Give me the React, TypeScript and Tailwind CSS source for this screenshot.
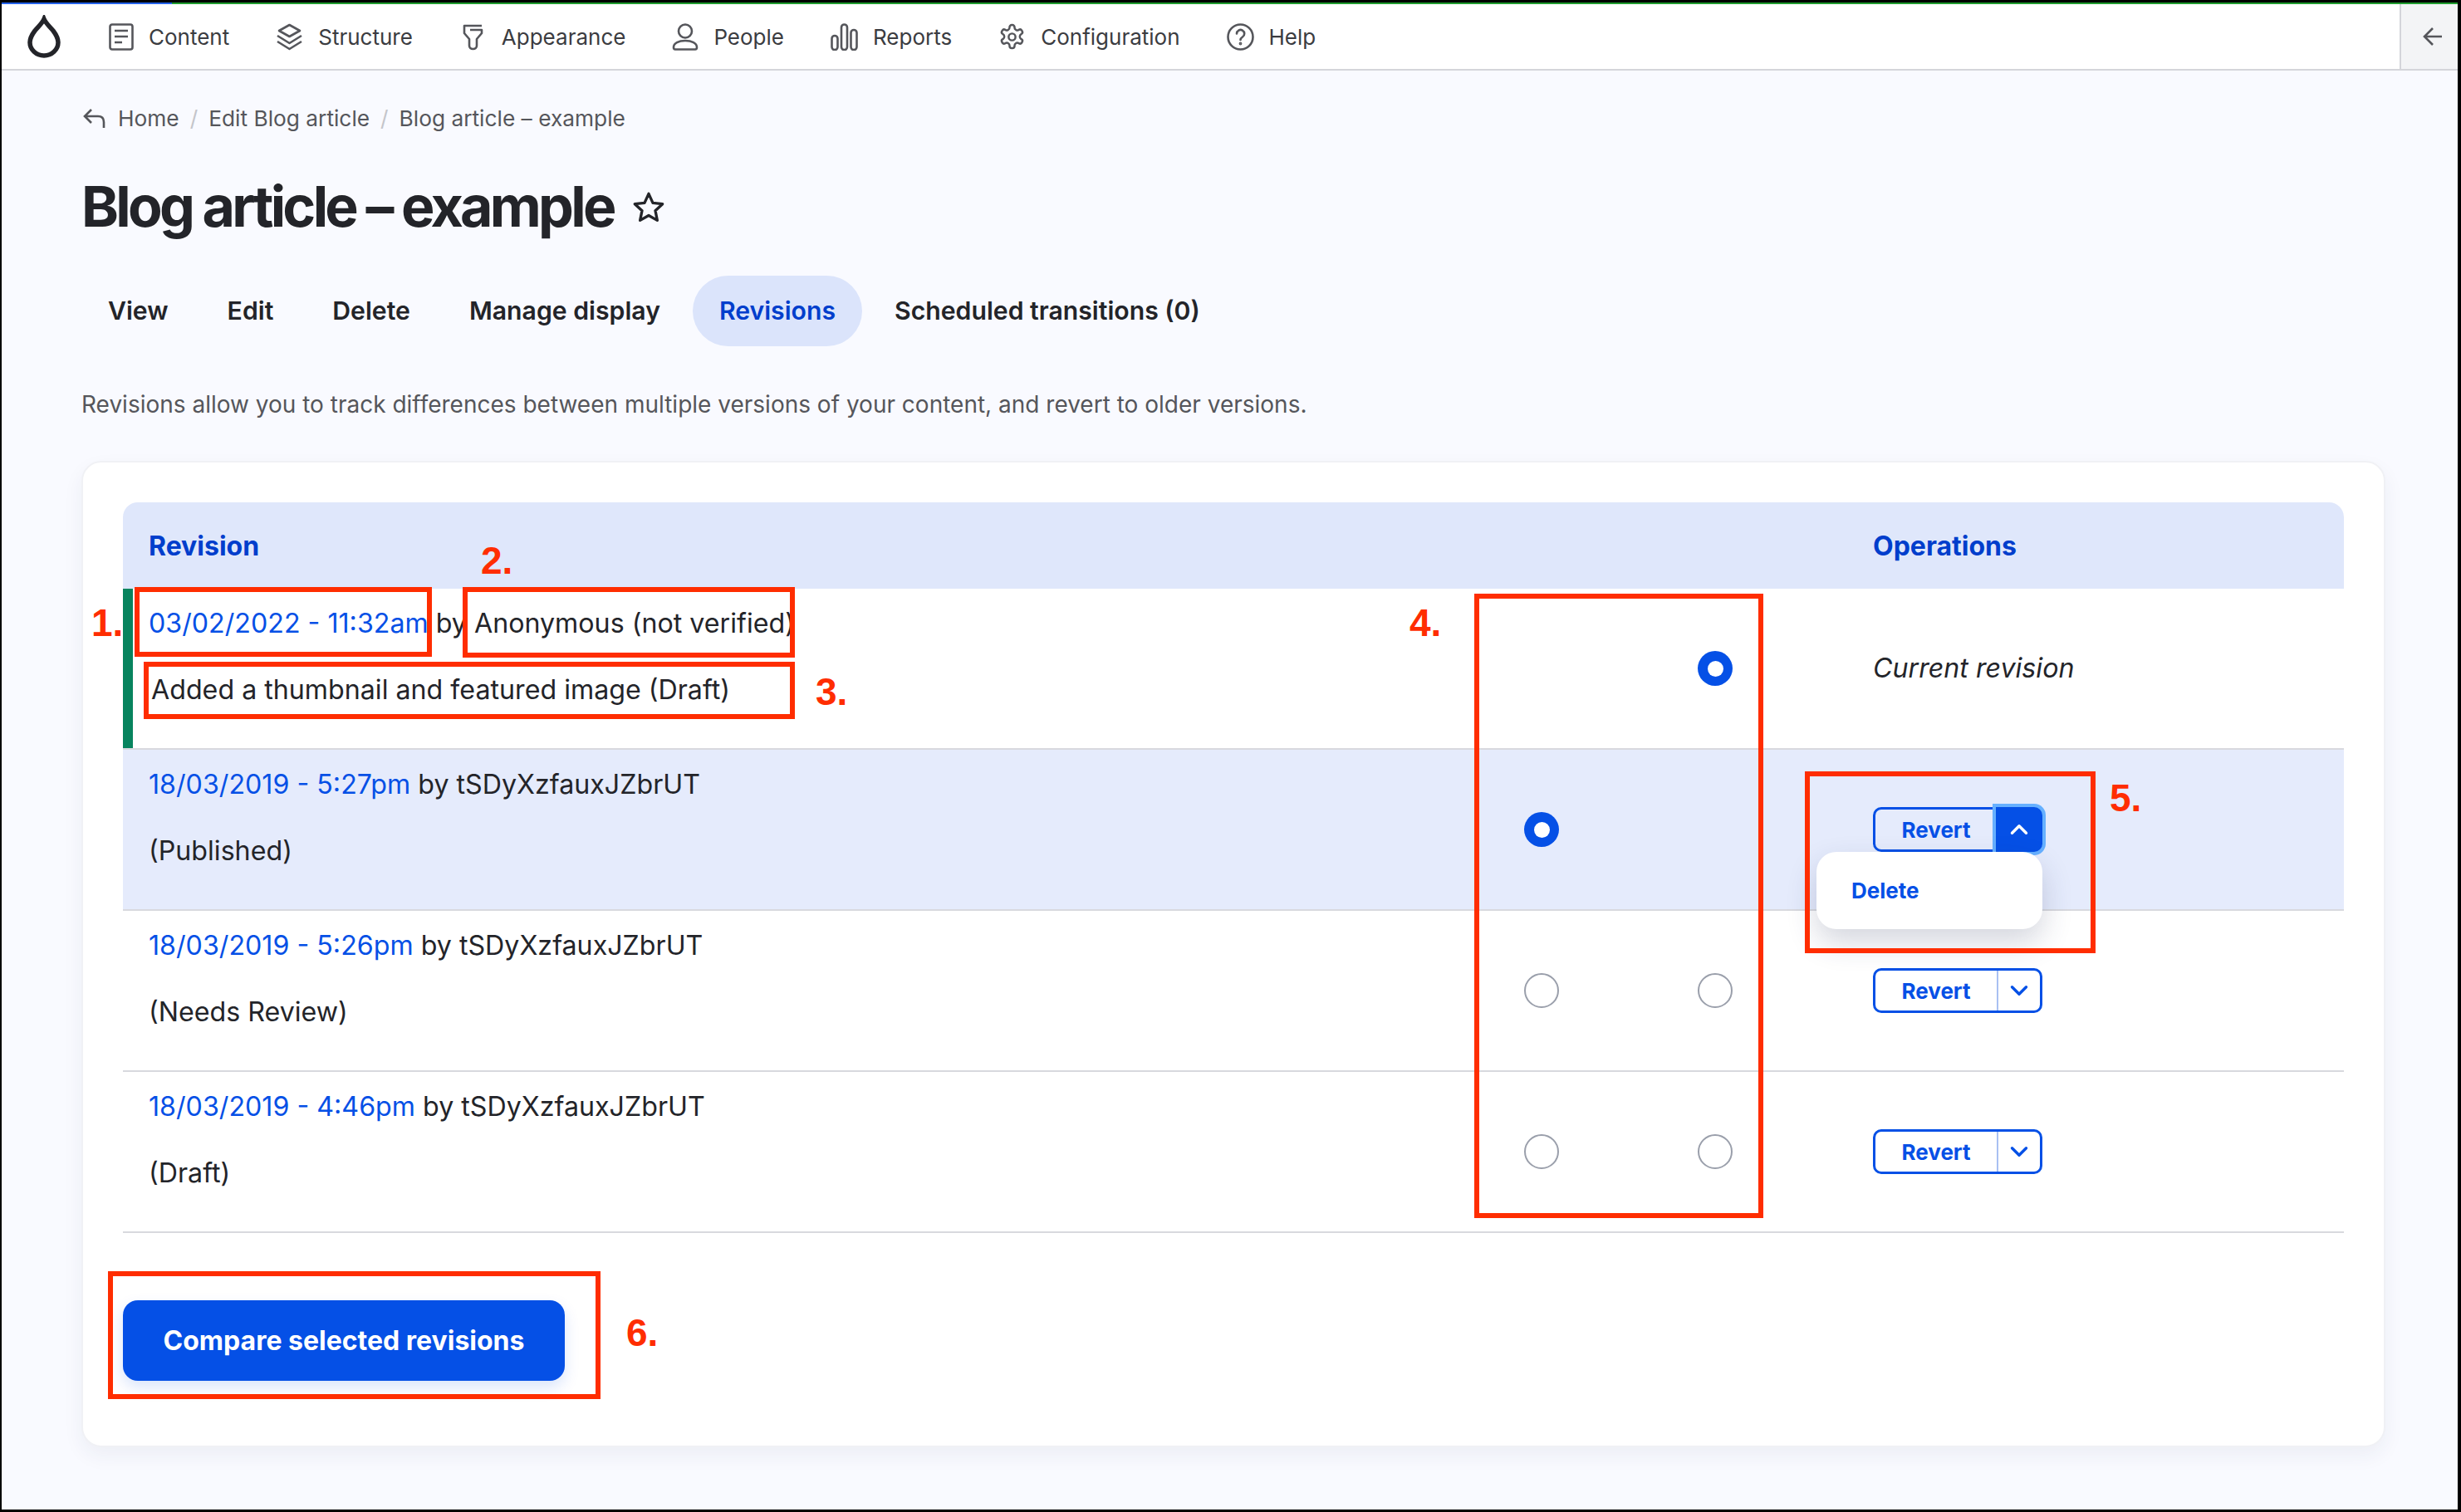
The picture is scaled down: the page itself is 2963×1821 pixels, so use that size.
import type { ReactNode } from 'react'
import { ChevronDown, ChevronUp } from 'lucide-react'

const navItems = [
  { label: 'Content', icon: <ContentIcon />, className: 'gap-[18px]' },
  { label: 'Structure', icon: <StructureIcon />, className: 'gap-[18px]' },
  { label: 'Appearance', icon: <AppearanceIcon />, className: 'ml-[4px] gap-[22px]' },
  { label: 'People', icon: <PeopleIcon />, className: 'gap-[18px]' },
  { label: 'Reports', icon: <ReportsIcon />, className: 'gap-[18px]' },
  { label: 'Configuration', icon: <GearIcon />, className: 'gap-[18px]' },
  { label: 'Help', icon: <HelpIcon />, className: 'gap-[18px]' },
]

const tabs = ['View', 'Edit', 'Delete', 'Manage display', 'Revisions', 'Scheduled transitions (0)']

const annotations = [
  'left-[162px] top-[707px] w-[358px] h-[84px]',
  'left-[557px] top-[707px] w-[400px] h-[85px]',
  'left-[173px] top-[797px] w-[784px] h-[69px]',
  'left-[1775px] top-[715px] w-[348px] h-[752px]',
  'left-[2173px] top-[929px] w-[350px] h-[219px]',
  'left-[130px] top-[1531px] w-[593px] h-[154px]',
]

const labels = [
  { text: '1.', className: 'left-[110px] top-[725px]' },
  { text: '2.', className: 'left-[579px] top-[650px]' },
  { text: '3.', className: 'left-[982px] top-[808px]' },
  { text: '4.', className: 'left-[1697px] top-[725px]' },
  { text: '5.', className: 'left-[2540px] top-[936px]' },
  { text: '6.', className: 'left-[754px] top-[1580px]' },
]

function ContentIcon() {
  return (
    <svg className="h-[33px] w-[30px]" viewBox="0 0 30 33" fill="none" stroke="#55565b" strokeWidth="2.6">
      <rect x="1.500" y="1.500" width="27" height="30" rx="2.500" />
      <path d="M7 9h16M7 16h16M7 23h9" />
    </svg>
  )
}

function StructureIcon() {
  return (
    <svg className="h-[33px] w-[33px]" viewBox="0 0 33 33" fill="none" stroke="#55565b" strokeWidth="2.6" strokeLinejoin="round">
      <path d="M16.500 2 29 9 16.500 16 4 9Z" />
      <path d="M2 15l14.500 9L31 15M2 22l14.500 9L31 22" />
    </svg>
  )
}

function AppearanceIcon() {
  return (
    <svg className="h-[33px] w-[25px]" viewBox="0 0 25 33" fill="none" stroke="#55565b" strokeWidth="2.6" strokeLinejoin="round">
      <path d="M23 3H2v9l6 7v8c0 2.500 2 4 4.500 4s4.500-1.500 4.500-4v-8l6-7V8H9" />
    </svg>
  )
}

function PeopleIcon() {
  return (
    <svg className="h-[33px] w-[32px]" viewBox="0 0 32 33" fill="none" stroke="#55565b" strokeWidth="2.6">
      <circle cx="16" cy="9.500" r="8" />
      <path d="M2 29c0-5 6-8 14-8s14 3 14 8c0 1.500-.8 2.500-2 2.500H4c-1.200 0-2-1-2-2.500Z" strokeLinejoin="round" />
    </svg>
  )
}

function ReportsIcon() {
  return (
    <svg className="h-[33px] w-[33px]" viewBox="0 0 33 33" fill="none" stroke="#55565b" strokeWidth="2.6">
      <rect x="1.500" y="15" width="7" height="17" rx="3.500" />
      <rect x="13" y="1.500" width="7" height="30.500" rx="3.500" />
      <rect x="24.500" y="8" width="7" height="24" rx="3.500" />
    </svg>
  )
}

function GearIcon() {
  return (
    <svg className="h-[33px] w-[33px]" viewBox="0 0 24 24" fill="none" stroke="#55565b" strokeWidth="1.8" strokeLinejoin="round">
      <path d="M12.200 1.500h-.4a2 2 0 0 0-2 2v.4a2 2 0 0 1-1 1.700l-.4.300a2 2 0 0 1-2 0l-.3-.2a2 2 0 0 0-2.700.7l-.2.400a2 2 0 0 0 .7 2.700l.3.200a2 2 0 0 1 1 1.700v.5a2 2 0 0 1-1 1.800l-.3.100a2 2 0 0 0-.7 2.700l.2.400a2 2 0 0 0 2.700.7l.3-.2a2 2 0 0 1 2 0l.4.300a2 2 0 0 1 1 1.700v.4a2 2 0 0 0 2 2h.4a2 2 0 0 0 2-2v-.4a2 2 0 0 1 1-1.700l.4-.3a2 2 0 0 1 2 0l.3.200a2 2 0 0 0 2.700-.7l.2-.4a2 2 0 0 0-.7-2.700l-.3-.1a2 2 0 0 1-1-1.800v-.5a2 2 0 0 1 1-1.700l.3-.2a2 2 0 0 0 .7-2.700l-.2-.4a2 2 0 0 0-2.700-.7l-.3.200a2 2 0 0 1-2 0l-.4-.3a2 2 0 0 1-1-1.700v-.4a2 2 0 0 0-2-2Z" />
      <circle cx="12" cy="12" r="3" />
    </svg>
  )
}

function HelpIcon() {
  return (
    <svg className="h-[33px] w-[33px]" viewBox="0 0 33 33" fill="none" stroke="#55565b" strokeWidth="2.6" strokeLinecap="round">
      <circle cx="16.500" cy="16.500" r="15" />
      <path d="M12 12.500a4.600 4.600 0 1 1 7 4c-1.500 1-2.500 1.800-2.500 3.500" />
      <circle cx="16.500" cy="24.500" r="0.600" fill="#55565b" />
    </svg>
  )
}

function RadioDot({ checked }: { checked?: boolean }) {
  if (checked) {
    return (
      <span className="flex h-[42px] w-[42px] items-center justify-center rounded-full bg-[#0550e6]">
        <span className="h-[19px] w-[19px] rounded-full bg-white" />
      </span>
    )
  }
  return <span className="h-[42px] w-[42px] rounded-full border-2 border-[#9a9fab] bg-white" />
}

function RevertButton() {
  return (
    <div className="flex h-[54px] w-[204px] overflow-hidden rounded-[10px] border-[3px] border-[#0550e6] bg-white text-[#0550e6]">
      <span className="flex w-[146px] items-center justify-center text-[26px] font-bold">Revert</span>
      <span className="flex flex-1 items-center justify-center border-l-2 border-[#a9c0f2]">
        <ChevronDown size={34} strokeWidth={2.4} />
      </span>
    </div>
  )
}

function OpenRevertButton() {
  return (
    <div className="relative flex h-[54px] w-[204px] rounded-[10px] border-[3px] border-[#0550e6] text-[#0550e6]">
      <span className="flex w-[146px] items-center justify-center text-[26px] font-bold">Revert</span>
      <span className="absolute top-[-3px] left-[145px] flex h-[54px] w-[56px] items-center justify-center rounded-r-[10px] bg-[#0550e6] text-white shadow-[0_0_0_4px_#66b0ff]">
        <ChevronUp size={34} strokeWidth={2.4} />
      </span>
      <div className="absolute top-[51px] left-[-71px] z-10 flex h-[93px] w-[272px] items-center rounded-[24px] bg-white pl-[42px] text-[26px] font-bold shadow-[0_16px_36px_rgba(40,50,90,0.2)]">
        Delete
      </div>
    </div>
  )
}

type RowProps = {
  date: string
  author: string
  note: string
  highlighted?: boolean
  current?: boolean
  left?: boolean
  right?: boolean
  action: ReactNode
  showLeft?: boolean
  showRight?: boolean
}

function RevisionRow({ date, author, note, highlighted, current, left, right, action, showLeft = true, showRight = true }: RowProps) {
  return (
    <div className={`flex h-[194px] items-center border-b-2 border-[#d8d9de] ${highlighted ? 'bg-[#e5ebfc]' : ''}`}>
      <div className={`flex h-full w-[1604px] flex-col pt-[22px] ${current ? 'border-l-[12px] border-[#07845e] pl-[19px]' : 'pl-[31px]'}`}>
        <p className="h-[80px] leading-[40px]">
          <a className="text-[#0550e6]">{date}</a> by {author}
        </p>
        <p className={`leading-[40px] ${current ? 'ml-[3px]' : ''}`}>{note}</p>
      </div>
      <div className="flex w-[208px] justify-center">{showLeft && <RadioDot checked={left} />}</div>
      <div className="flex w-[210px] justify-center">{showRight && <RadioDot checked={right} />}</div>
      <div className="pl-[85px]">{action}</div>
    </div>
  )
}

export default function App() {
  return (
    <div className="relative h-[1821px] w-[2963px] overflow-hidden border-t-[3px] border-r-4 border-b-[3px] border-l-2 border-black bg-[#f9faff] font-['Inter',sans-serif] text-[#232429]">
      <div className="flex h-[2px]">
        <div className="w-[205px] bg-[#2563eb]" />
        <div className="flex-1 bg-[#1f9d2f]" />
      </div>

      <header className="flex h-[80px] items-center border-b-2 border-[#d4d5da] bg-white">
        <svg className="ml-[30px] h-[52px] w-[42px]" viewBox="0 0 42 52" fill="none" stroke="#232429" strokeWidth="5.500">
          <path d="M21 5c-2 5-7 9-11 14-3 4-6 8-6 14a17 16 0 0 0 34 0c0-6-3-10-6-14-4-5-9-9-11-14Z" />
        </svg>
        <nav className="ml-[57px] flex items-center gap-[56px] text-[26px] text-[#3b3c41]">
          {navItems.map((item) => (
            <div key={item.label} className={`flex items-center ${item.className}`}>
              {item.icon}
              <span>{item.label}</span>
            </div>
          ))}
        </nav>
        <div className="ml-auto flex h-full w-[70px] items-center justify-center border-l-2 border-[#d4d5da] bg-[#f3f4f6] pl-[8px]">
          <svg className="h-[24px] w-[24px]" viewBox="0 0 24 24" fill="none" stroke="#55565b" strokeWidth="2.600">
            <path d="M23 12H3M12 2 2 12l10 10" />
          </svg>
        </div>
      </header>

      <main className="pt-[40px] pr-[87px] pl-[96px]">
        <div className="flex items-center text-[26.300px] leading-[36px] text-[#55565b]">
          <svg className="mr-[14px] ml-[2px] h-[28px] w-[28px]" viewBox="0 0 28 28" fill="none" stroke="#55565b" strokeWidth="2.600">
            <path d="M10 3 2 11l8 8M2 11h16c5 0 7 3 7 7v7" />
          </svg>
          <span>Home</span>
          <span className="mx-[13px] text-[#c4c5ca]">/</span>
          <span>Edit Blog article</span>
          <span className="mx-[13px] text-[#c4c5ca]">/</span>
          <span>Blog article – example</span>
        </div>

        <div className="mt-[42px] flex items-center">
          <h1 className="text-[68px] leading-[90px] font-bold tracking-[-0.055em]">Blog article – example</h1>
          <svg className="mt-[4px] ml-[22px] h-[40px] w-[40px]" viewBox="0 0 24 24" fill="none" stroke="#232429" strokeWidth="2" strokeLinejoin="round">
            <path d="m12 2 3 6.600 7 .8-5.200 4.800 1.400 7L12 17.700 5.800 21.200l1.400-7L2 9.400l7-.8Z" />
          </svg>
        </div>

        <div className="mt-[39px] flex gap-[7px] text-[30.200px] font-semibold">
          {tabs.map((tab) => (
            <div
              key={tab}
              className={`flex h-[85px] items-center rounded-[43px] px-[32px] ${tab === 'Revisions' ? 'bg-[#dbe4fb] text-[#003ecc]' : ''}`}
            >
              {tab}
            </div>
          ))}
        </div>

        <p className="mt-[50px] text-[28px] leading-[40px] text-[#55565b]">
          Revisions allow you to track differences between multiple versions of your content, and revert to older versions.
        </p>

        <section className="mt-[48px] h-[1188px] rounded-[24px] border-2 border-[#f0f1f5] bg-white px-[48px] pt-[48px] text-[32.200px] shadow-[0_10px_24px_rgba(40,50,90,0.06)]">
          <div className="flex h-[104px] items-center rounded-t-[18px] bg-[#dfe7fb] pt-[2px] text-[32px] font-bold text-[#003ecc]">
            <div className="w-[2022px] pl-[31px]">Revision</div>
            <div className="pl-[85px]">Operations</div>
          </div>
          <RevisionRow
            current
            date="03/02/2022 - 11:32am"
            author="Anonymous (not verified)"
            note="Added a thumbnail and featured image (Draft)"
            showLeft={false}
            right
            action={<span className="italic">Current revision</span>}
          />
          <RevisionRow
            highlighted
            date="18/03/2019 - 5:27pm"
            author="tSDyXzfauxJZbrUT"
            note="(Published)"
            left
            showRight={false}
            action={<OpenRevertButton />}
          />
          <RevisionRow date="18/03/2019 - 5:26pm" author="tSDyXzfauxJZbrUT" note="(Needs Review)" action={<RevertButton />} />
          <RevisionRow date="18/03/2019 - 4:46pm" author="tSDyXzfauxJZbrUT" note="(Draft)" action={<RevertButton />} />
          <button className="mt-[81px] h-[97px] w-[532px] rounded-[18px] bg-[#0550e6] text-[32px] font-bold text-white shadow-[0_8px_18px_rgba(5,80,230,0.15)]">
            Compare selected revisions
          </button>
        </section>
      </main>

      {annotations.map((box) => (
        <div key={box} className={`pointer-events-none absolute z-20 -mt-[3px] -ml-[2px] border-[6px] border-[#ff2d00] ${box}`} />
      ))}
      {labels.map((label) => (
        <span
          key={label.text}
          className={`absolute z-20 -mt-[3px] -ml-[2px] font-['Liberation_Sans',sans-serif] text-[46px] leading-[50px] font-bold text-[#ff2d00] ${label.className}`}
        >
          {label.text}
        </span>
      ))}
    </div>
  )
}
